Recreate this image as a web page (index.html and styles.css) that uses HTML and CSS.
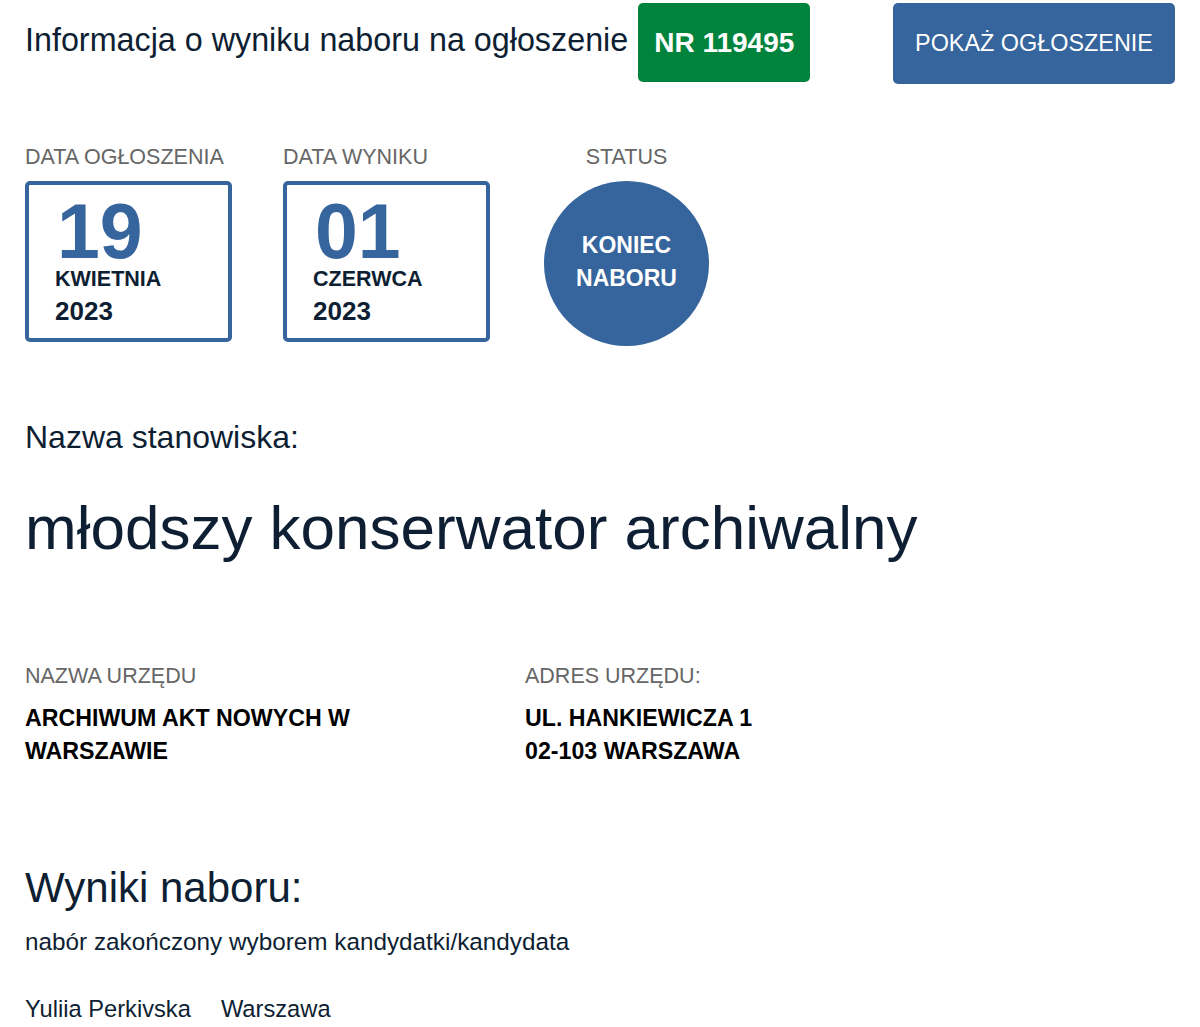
FILE: index.html
```html
<!DOCTYPE html>
<html lang="pl">
<head>
	<meta charset="utf-8">
	<title>Informacja o wyniku naboru</title>
	<link rel="stylesheet" href="styles.css">
</head>
<body>
	<!-- header: title, number badge, button -->
	<div class="top">
		<h1 class="title">Informacja o wyniku naboru na ogłoszenie</h1>
		<span class="nr">NR 119495</span>
		<a class="btn" href="#">POKAŻ OGŁOSZENIE</a>
	</div>

	<!-- dates and status -->
	<div class="dates">
		<div class="date">
			<div class="label">DATA OGŁOSZENIA</div>
			<div class="box">
				<div class="day">19</div>
				<div class="month">KWIETNIA</div>
				<div class="year">2023</div>
			</div>
		</div>
		<div class="date">
			<div class="label">DATA WYNIKU</div>
			<div class="box">
				<div class="day">01</div>
				<div class="month">CZERWCA</div>
				<div class="year">2023</div>
			</div>
		</div>
		<div class="status">
			<div class="label">STATUS</div>
			<div class="circle">KONIEC<br>NABORU</div>
		</div>
	</div>

	<h3 class="sub">Nazwa stanowiska:</h3>
	<h2 class="position">młodszy konserwator archiwalny</h2>

	<div class="office">
		<div class="col">
			<div class="label">NAZWA URZĘDU</div>
			<div class="value">ARCHIWUM AKT NOWYCH W<br>WARSZAWIE</div>
		</div>
		<div class="col">
			<div class="label">ADRES URZĘDU:</div>
			<div class="value">UL. HANKIEWICZA 1<br>02-103 WARSZAWA</div>
		</div>
	</div>

	<h2 class="results">Wyniki naboru:</h2>
	<p class="text">nabór zakończony wyborem kandydatki/kandydata</p>
	<p class="person"><span>Yuliia Perkivska</span><span>Warszawa</span></p>
</body>
</html>
```

FILE: styles.css
```css
*{
	margin: 0px;
	padding: 0px;
	box-sizing: border-box;
}
body{
	font-family: "Liberation Sans", Arial, sans-serif;
	color: #0e1f33;
	background: white;
	padding: 0px 25px;
}
.top{
	display: flex;
	align-items: flex-start;
	height: 86px;
}
.title{
	font-size: 32.3px;
	line-height: 37px;
	font-weight: normal;
	margin: 22px 10px 0px 0px;
}
.nr{
	background: #00843d;
	color: white;
	font-weight: bold;
	font-size: 28px;
	width: 172px;
	height: 79px;
	margin-top: 3px;
	border-radius: 5px;
	display: flex;
	align-items: center;
	justify-content: center;
}
.btn{
	margin: 3px 0px 0px auto;
	background: #36649c;
	color: white;
	text-decoration: none;
	font-size: 23.4px;
	width: 282px;
	height: 81px;
	border-radius: 5px;
	display: flex;
	align-items: center;
	justify-content: center;
}
.dates{
	display: flex;
	gap: 51px;
	margin-top: 59px;
}
.label{
	font-size: 21.5px;
	line-height: 24px;
	color: #666;
	text-transform: uppercase;
	margin-bottom: 12px;
}
.date{
	width: 207px;
}
.box{
	border: 4px solid #36649c;
	border-radius: 5px;
	height: 161px;
	padding: 10px 0px 0px 26px;
}
.day{
	font-size: 77px;
	font-weight: bold;
	color: #36649c;
	line-height: 72px;
	padding-left: 2px;
}
.month{
	font-size: 21.5px;
	line-height: 24px;
	font-weight: bold;
}
.year{
	font-size: 26px;
	line-height: 30px;
	font-weight: bold;
	margin-top: 5px;
}
.status{
	width: 165px;
	margin-left: 3px;
	text-align: center;
}
.circle{
	width: 165px;
	height: 165px;
	border-radius: 50%;
	background: #36649c;
	color: white;
	font-weight: bold;
	font-size: 23px;
	line-height: 33px;
	padding-bottom: 4px;
	display: flex;
	align-items: center;
	justify-content: center;
}
.sub{
	font-size: 32px;
	line-height: 37px;
	font-weight: normal;
	margin-top: 73px;
}
.position{
	font-size: 62px;
	line-height: 72px;
	font-weight: normal;
	margin-top: 36px;
}
.office{
	display: flex;
	margin-top: 100px;
}
.col{
	width: 500px;
}
.office .label{
	margin-bottom: 14px;
}
.value{
	font-size: 23.2px;
	font-weight: bold;
	color: black;
	line-height: 33px;
}
.results{
	font-size: 42px;
	line-height: 48px;
	font-weight: normal;
	margin-top: 96px;
}
.text{
	font-size: 24.3px;
	line-height: 28px;
	margin-top: 16px;
}
.person{
	font-size: 23.7px;
	line-height: 28px;
	margin-top: 39px;
	display: flex;
	gap: 30px;
}
```
